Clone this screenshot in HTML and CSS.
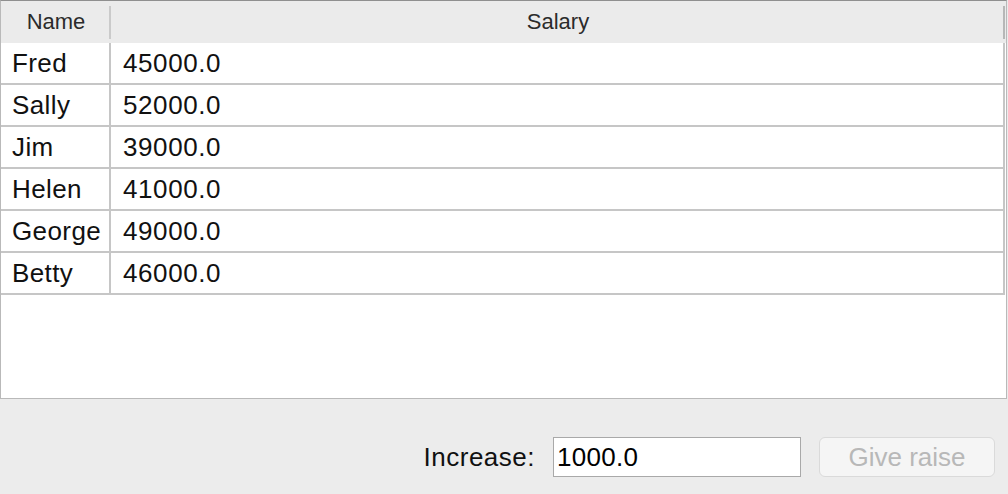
FILE: index.html
```html
<!DOCTYPE html>
<html>
<head>
<meta charset="utf-8">
<link rel="stylesheet" href="styles.css">
</head>
<body>
<div class="frame">
  <div class="header">
    <div class="hcell hname">Name</div>
    <div class="hcell hsalary">Salary</div>
  </div>
  <div class="row"><div class="cell cname">Fred</div><div class="cell csalary">45000.0</div></div>
  <div class="row"><div class="cell cname">Sally</div><div class="cell csalary">52000.0</div></div>
  <div class="row"><div class="cell cname">Jim</div><div class="cell csalary">39000.0</div></div>
  <div class="row"><div class="cell cname">Helen</div><div class="cell csalary">41000.0</div></div>
  <div class="row"><div class="cell cname">George</div><div class="cell csalary">49000.0</div></div>
  <div class="row"><div class="cell cname">Betty</div><div class="cell csalary">46000.0</div></div>
</div>
<div class="controls">
  <span class="label">Increase:</span>
  <input class="field" type="text" value="1000.0">
  <button class="btn" disabled>Give raise</button>
</div>
</body>
</html>
```

FILE: styles.css
```css
html, body {
  margin: 0;
  padding: 0;
}
body {
  width: 1008px;
  height: 494px;
  background: #ececec;
  font-family: "Liberation Sans", Arial, sans-serif;
  overflow: hidden;
}
.frame {
  box-sizing: border-box;
  width: 1007px;
  height: 399px;
  background: #ffffff;
  border-top: 1px solid #8f8f8f;
  border-left: 1px solid #b9b9b9;
  border-right: 1px solid #b9b9b9;
  border-bottom: 1px solid #b9b9b9;
}
.header {
  display: flex;
  height: 42px;
  background: #ebebeb;
  padding-right: 1px;
}
.hcell {
  display: flex;
  align-items: center;
  justify-content: center;
  font-size: 22px;
  color: #2b2b2b;
  position: relative;
}
.hname {
  width: 110px;
}
.hsalary {
  flex: 1;
}
.hcell::after {
  content: "";
  position: absolute;
  right: 0;
  top: 5px;
  bottom: 4px;
  width: 2px;
  background: #cacaca;
}
.hsalary::after {
  background: #b7b7b7;
}
.row {
  display: flex;
  height: 42px;
  box-sizing: border-box;
  border-bottom: 2px solid #c6c6c6;
  margin-right: 1px;
}
.cell {
  display: flex;
  align-items: center;
  padding-top: 1px;
  font-size: 26px;
  letter-spacing: 0.4px;
  color: #111111;
  box-sizing: border-box;
  border-right: 2px solid #c6c6c6;
}
.cname {
  width: 110px;
  padding-left: 11px;
}
.csalary {
  flex: 1;
  padding-left: 12px;
  letter-spacing: 0.6px;
}
.controls {
  display: flex;
  justify-content: flex-end;
  align-items: center;
  height: 95px;
  box-sizing: border-box;
  padding: 38px 13px 17px 0;
  gap: 18px;
}
.label {
  font-size: 26px;
  letter-spacing: 0.5px;
  color: #111111;
}
.field {
  box-sizing: border-box;
  width: 248px;
  height: 40px;
  margin: 0;
  border: 1px solid #a9a9a9;
  background: #ffffff;
  padding: 0 0 0 3px;
  font-family: "Liberation Sans", Arial, sans-serif;
  font-size: 26px;
  letter-spacing: 0.3px;
  color: #000000;
  outline: none;
}
.btn {
  box-sizing: border-box;
  width: 176px;
  height: 40px;
  margin: 0;
  border: 1px solid #dadada;
  border-radius: 6px;
  background: #f5f5f5;
  font-family: "Liberation Sans", Arial, sans-serif;
  font-size: 26px;
  color: #b8b8b8;
  padding: 0;
}
```
